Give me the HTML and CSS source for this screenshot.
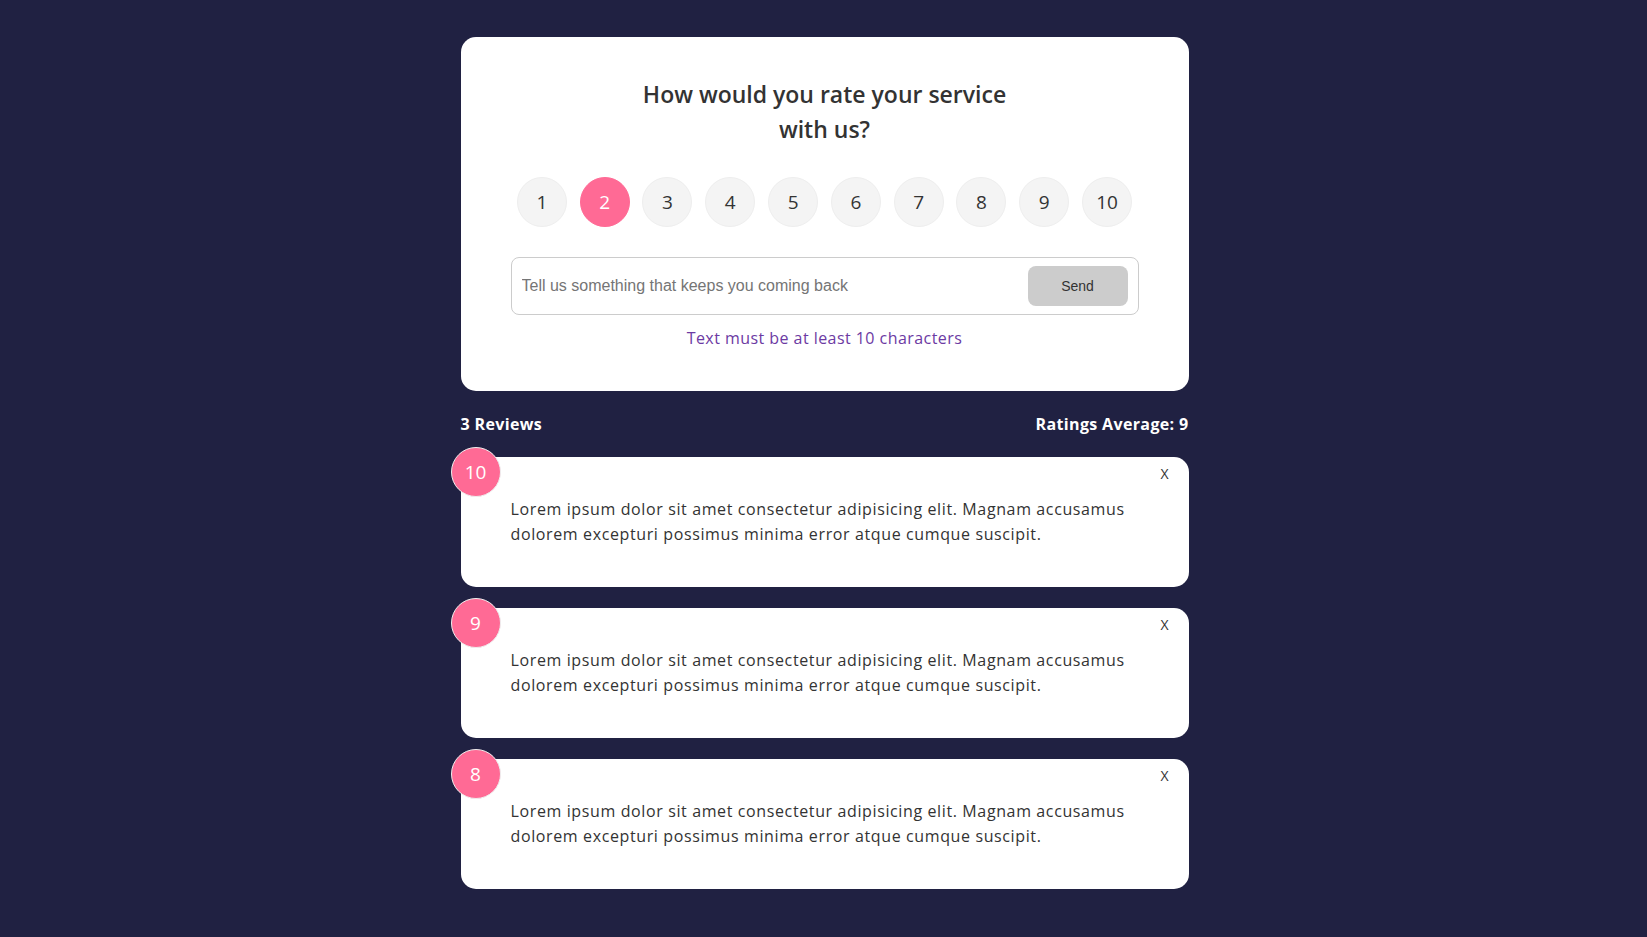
FILE: index.html
```html
<!DOCTYPE html>
<html lang="en">
<head>
<meta charset="utf-8">
<title>Feedback UI</title>
<link rel="stylesheet" href="styles.css">
</head>
<body>
<div class="container">
  <div class="card">
    <form class="rating-form">
      <h2 class="title">How would you rate your service with us?</h2>
      <ul class="rating">
        <li class="num">1</li>
        <li class="num selected">2</li>
        <li class="num">3</li>
        <li class="num">4</li>
        <li class="num">5</li>
        <li class="num">6</li>
        <li class="num">7</li>
        <li class="num">8</li>
        <li class="num">9</li>
        <li class="num">10</li>
      </ul>
      <div class="input-group">
        <input class="text-input" type="text" placeholder="Tell us something that keeps you coming back">
        <button class="btn" type="button">Send</button>
      </div>
      <div class="message">Text must be at least 10 characters</div>
    </form>
  </div>

  <div class="stats">
    <h4>3 Reviews</h4>
    <h4>Ratings Average: 9</h4>
  </div>

  <div class="list">
    <div class="card review">
      <div class="num-display">10</div>
      <button class="close" type="button">X</button>
      <div class="text-display">Lorem ipsum dolor sit amet consectetur adipisicing elit. Magnam accusamus dolorem excepturi possimus minima error atque cumque suscipit.</div>
    </div>
    <div class="card review">
      <div class="num-display">9</div>
      <button class="close" type="button">X</button>
      <div class="text-display">Lorem ipsum dolor sit amet consectetur adipisicing elit. Magnam accusamus dolorem excepturi possimus minima error atque cumque suscipit.</div>
    </div>
    <div class="card review">
      <div class="num-display">8</div>
      <button class="close" type="button">X</button>
      <div class="text-display">Lorem ipsum dolor sit amet consectetur adipisicing elit. Magnam accusamus dolorem excepturi possimus minima error atque cumque suscipit.</div>
    </div>
  </div>
</div>
</body>
</html>
```

FILE: styles.css
```css
* {
  box-sizing: border-box;
  margin: 0;
  padding: 0;
}

body {
  font-family: "Open Sans", "Noto Sans", sans-serif;
  background-color: #202142;
  color: #333;
  line-height: 1.5;
}

.container {
  max-width: 768px;
  margin: 37px auto 0;
  padding: 0 19px 0 21px;
}

.card {
  background-color: #fff;
  color: #333;
  border-radius: 15px;
  padding: 40px 50px 41px;
  position: relative;
}

.title {
  font-size: 23px;
  font-weight: 600;
  line-height: 34.5px;
  text-align: center;
  max-width: 390px;
  margin: 0 auto;
}

.rating {
  list-style: none;
  display: flex;
  justify-content: space-around;
  align-items: center;
  margin: 31px 0 30px;
}

.num {
  width: 50px;
  height: 50px;
  border-radius: 50%;
  background: #f4f4f4;
  border: 1px solid #eee;
  display: flex;
  align-items: center;
  justify-content: center;
  font-size: 19px;
  color: #333;
}

.num.selected {
  background: #ff6a95;
  color: #fff;
  border-color: #ff6a95;
}

.input-group {
  display: flex;
  align-items: center;
  border: 1px solid #ccc;
  border-radius: 8px;
  padding: 8px 10px;
}

.text-input {
  flex: 1;
  border: none;
  outline: none;
  font-family: "Liberation Sans", Arial, sans-serif;
  font-size: 16px;
  color: #333;
  background: transparent;
}

.text-input::placeholder {
  color: #757575;
}

.btn {
  width: 100px;
  height: 40px;
  border: 0;
  border-radius: 8px;
  background: #cccccc;
  color: #333;
  font-family: "Liberation Sans", Arial, sans-serif;
  font-size: 14px;
}

.message {
  text-align: center;
  color: #6c3aa3;
  font-size: 16px;
  line-height: 24px;
  letter-spacing: 0.45px;
  margin-top: 11px;
}

.stats {
  display: flex;
  justify-content: space-between;
  align-items: center;
  color: #fff;
  margin: 21px 0 21px;
}

.stats h4 {
  font-size: 16px;
  font-weight: 700;
  line-height: 24px;
  letter-spacing: 0.35px;
}

.list {
  display: flex;
  flex-direction: column;
  gap: 21px;
  padding-bottom: 40px;
}

.review {
  padding: 40px 50px;
}

.num-display {
  position: absolute;
  top: -10px;
  left: -10px;
  width: 50px;
  height: 50px;
  border-radius: 50%;
  background: #ff6a95;
  border: 1px solid #eee;
  color: #fff;
  font-size: 19px;
  display: flex;
  align-items: center;
  justify-content: center;
}

.close {
  position: absolute;
  top: 10px;
  right: 20px;
  background: none;
  border: none;
  font-family: "Open Sans", sans-serif;
  font-size: 14px;
  line-height: 1;
  color: #333;
  cursor: pointer;
}

.text-display {
  font-size: 16px;
  line-height: 25px;
  letter-spacing: 0.62px;
}
```
